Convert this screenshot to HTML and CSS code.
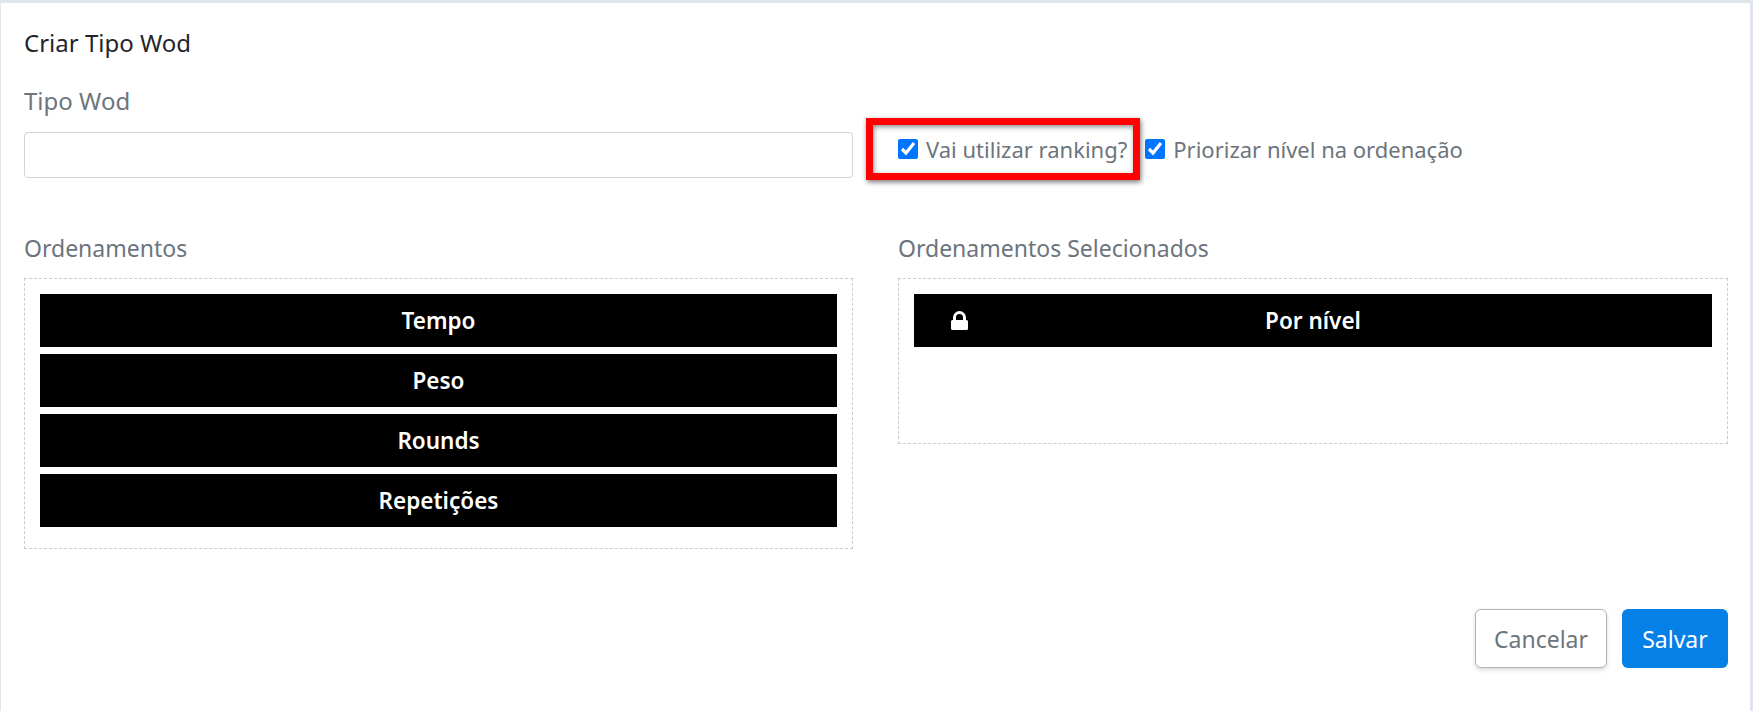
FILE: index.html
```html
<!DOCTYPE html>
<html lang="pt-BR">
<head>
    <meta charset="UTF-8">
    <title>Criar Tipo Wod</title>
    <link rel="stylesheet" href="styles.css">
</head>
<body>
    <div class="card">
        <h1 class="card-title">Criar Tipo Wod</h1>

        <!-- Tipo e opções -->
        <div class="form-row">
            <div class="col">
                <label class="field-label" for="tipo">Tipo Wod</label>
                <input class="text-input" type="text" id="tipo">
            </div>
            <div class="col checks">
                <label class="check"><input type="checkbox" checked> Vai utilizar ranking?</label>
                <label class="check"><input type="checkbox" checked> Priorizar nível na ordenação</label>
                <div class="highlight"></div>
            </div>
        </div>

        <!-- Ordenamentos -->
        <div class="lists-row">
            <div class="col">
                <div class="list-label">Ordenamentos</div>
                <div class="drop-box">
                    <div class="drop-item">Tempo</div>
                    <div class="drop-item">Peso</div>
                    <div class="drop-item">Rounds</div>
                    <div class="drop-item">Repetições</div>
                </div>
            </div>
            <div class="col">
                <div class="list-label">Ordenamentos Selecionados</div>
                <div class="drop-box drop-box-selected">
                    <div class="drop-item">
                        <svg class="lock" viewBox="0 0 17 19" width="17" height="19">
                            <path d="M2 9V6.500a6.500 6.500 0 0 1 13 0V9h.5A1.500 1.500 0 0 1 17 10.500v7A1.500 1.500 0 0 1 15.500 19h-14A1.500 1.500 0 0 1 0 17.500v-7A1.500 1.500 0 0 1 1.500 9zm3 0h7V6.500a3.500 3.500 0 0 0-7 0z" fill="#fff"/>
                        </svg>
                        Por nível
                    </div>
                </div>
            </div>
        </div>

        <div class="actions">
            <button class="btn btn-cancel" type="button">Cancelar</button>
            <button class="btn btn-save" type="button">Salvar</button>
        </div>
    </div>
</body>
</html>
```

FILE: styles.css
```css
* {
    margin: 0;
    padding: 0;
    box-sizing: border-box;
    font-family: 'Noto Sans', 'Liberation Sans', sans-serif;
}

body {
    background-color: #e0e4ec;
    height: 711px;
    overflow: hidden;
    padding: 3px 3px 0 1px;
}

.card {
    background-color: #fff;
    height: 708px;
    padding: 27px 22px 0 23px;
}

.card-title {
    font-size: 24px;
    font-weight: 400;
    line-height: 26px;
    color: #212529;
}

.form-row,
.lists-row {
    display: grid;
    grid-template-columns: 829px 830px;
    column-gap: 45px;
}

.form-row {
    margin-top: 32px;
}

.field-label {
    display: block;
    font-size: 24px;
    line-height: 26px;
    color: #6c757d;
}

.text-input {
    display: block;
    width: 100%;
    height: 46px;
    margin-top: 18px;
    border: 1px solid #ced4da;
    border-radius: 4px;
}

.checks {
    position: relative;
    display: flex;
    align-items: flex-start;
    gap: 18px;
    padding-top: 47px;
}

.check {
    display: flex;
    align-items: center;
    gap: 8px;
    font-size: 22px;
    line-height: 28px;
    color: #6c757d;
    white-space: nowrap;
}

.check input {
    width: 20px;
    height: 20px;
    accent-color: #0075ff;
}

/* Recuadro vermelho da anotação */
.highlight {
    position: absolute;
    left: -32px;
    top: 30px;
    width: 274px;
    height: 62px;
    border: 7px solid #f00;
    box-shadow: 1px 2px 5px rgba(0, 0, 0, 0.55), inset 1px 2px 5px rgba(0, 0, 0, 0.45);
}

.lists-row {
    margin-top: 57px;
    align-items: start;
}

.list-label {
    font-size: 23px;
    line-height: 26px;
    color: #6c757d;
}

.drop-box {
    margin-top: 17px;
    border: 1px dashed #ccc;
    padding: 15px;
    display: flex;
    flex-direction: column;
    gap: 7px;
    height: 271px;
}

.drop-box-selected {
    height: 166px;
}

.drop-item {
    position: relative;
    height: 53px;
    background-color: #000;
    color: #fff;
    font-size: 22.500px;
    font-weight: 600;
    display: flex;
    align-items: center;
    justify-content: center;
}

.lock {
    position: absolute;
    left: 37px;
    top: 17px;
}

.actions {
    display: flex;
    justify-content: flex-end;
    gap: 15px;
    margin-top: 60px;
}

.btn {
    height: 59px;
    border-radius: 6px;
    font-size: 23px;
    cursor: pointer;
}

.btn-cancel {
    width: 132px;
    background-color: #fff;
    color: #6c757d;
    border: 1px solid #adb5bd;
    box-shadow: 0 2px 4px rgba(0, 0, 0, 0.15);
}

.btn-save {
    width: 106px;
    background-color: #0580e6;
    color: #fff;
    border: none;
}
```
